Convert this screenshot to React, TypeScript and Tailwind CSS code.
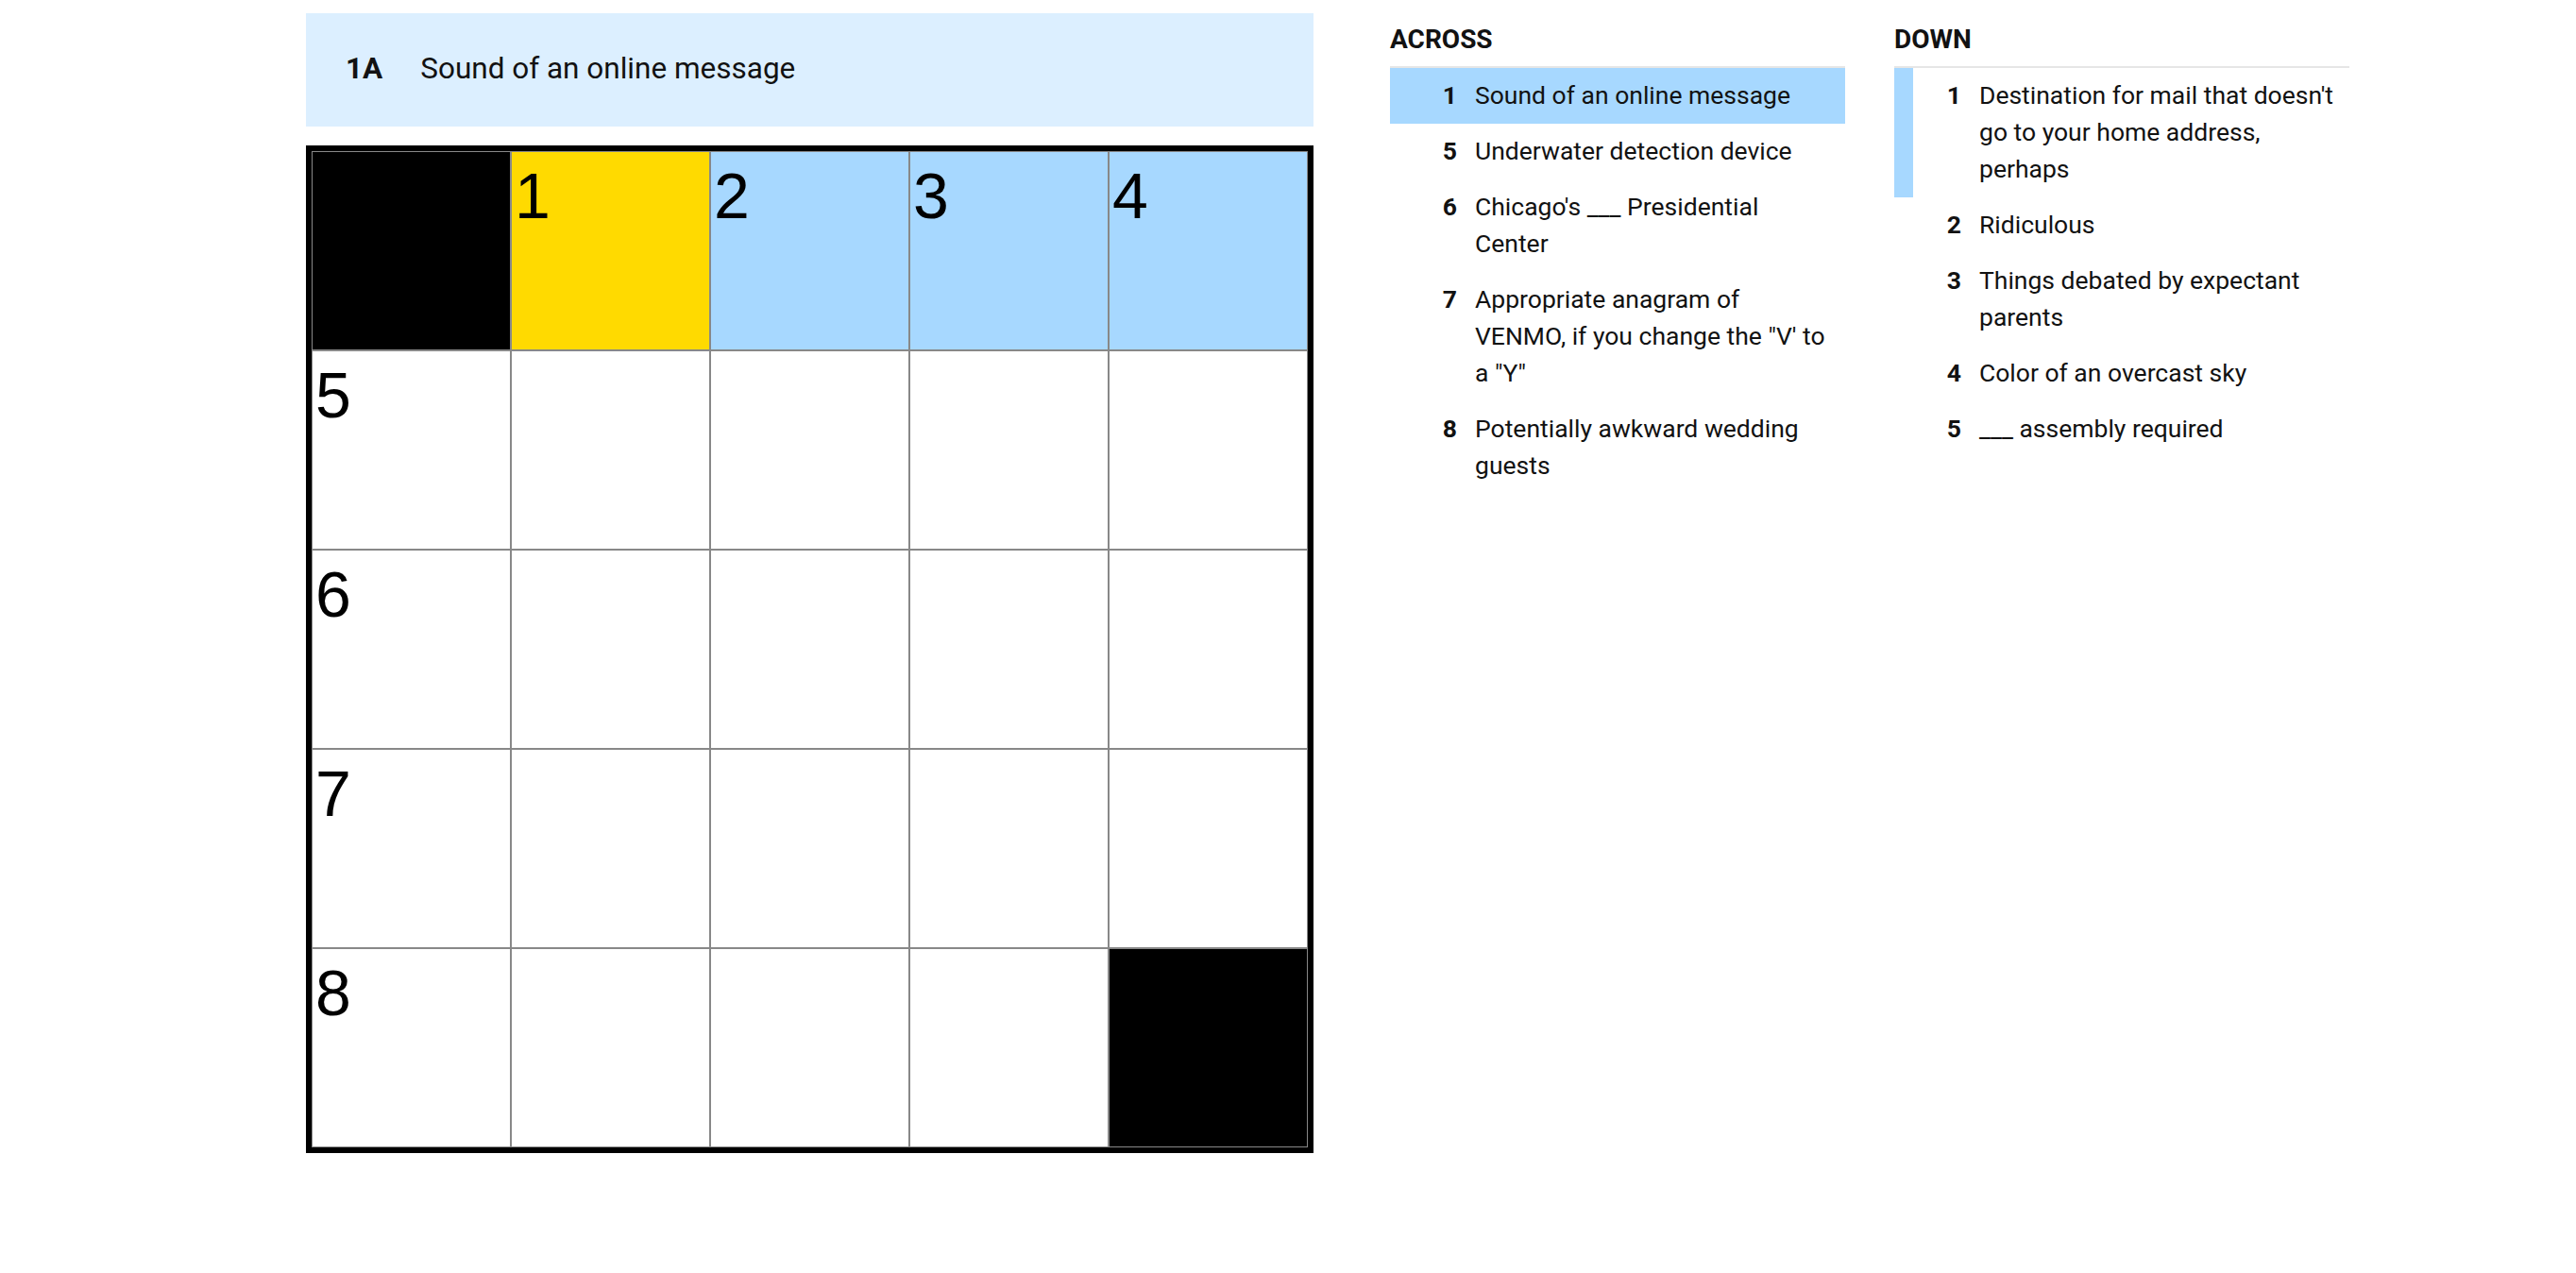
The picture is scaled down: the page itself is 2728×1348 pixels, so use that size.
import React from 'react';

type Clue = { n: number; text: string };

const across: Clue[] = [
  { n: 1, text: 'Sound of an online message' },
  { n: 5, text: 'Underwater detection device' },
  { n: 6, text: "Chicago's ___ Presidential Center" },
  // break kept where the narrow column puts it
  { n: 7, text: 'Appropriate anagram of\nVENMO, if you change the "V\' to a "Y"' },
  { n: 8, text: 'Potentially awkward wedding guests' },
];

const down: Clue[] = [
  { n: 1, text: "Destination for mail that doesn't go to your home address, perhaps" },
  { n: 2, text: 'Ridiculous' },
  { n: 3, text: 'Things debated by expectant parents' },
  { n: 4, text: 'Color of an overcast sky' },
  { n: 5, text: '___ assembly required' },
];

// '#' = block, anything else = open square; numbers live in a separate map
const layout = ['#....', '.....', '.....', '.....', '....#'];
const labels: Record<string, number> = {
  '0-1': 1,
  '0-2': 2,
  '0-3': 3,
  '0-4': 4,
  '1-0': 5,
  '2-0': 6,
  '3-0': 7,
  '4-0': 8,
};

const FONT = { fontFamily: 'Roboto, "Liberation Sans", sans-serif' };

function cellColor(r: number, c: number) {
  if (layout[r][c] === '#') return 'bg-black';
  if (r === 0 && c === 1) return 'bg-[#ffda00]';
  if (r === 0) return 'bg-[#a7d8ff]';
  return 'bg-white';
}

function Board() {
  return (
    <div className="border-[6px] border-black w-fit">
      <div className="grid grid-cols-[repeat(5,211px)] grid-rows-[repeat(5,211px)]">
        {layout.map((row, r) =>
          row.split('').map((_, c) => {
            const label = labels[`${r}-${c}`];
            return (
              <div
                key={`${r}-${c}`}
                className={`border border-[#888888] pl-[3px] pt-[12px] ${cellColor(r, c)}`}
              >
                {label && (
                  <span
                    className="block text-[68px] leading-none text-black"
                    style={{ fontFamily: '"Liberation Sans", Arial, sans-serif' }}
                  >
                    {label}
                  </span>
                )}
              </div>
            );
          })
        )}
      </div>
    </div>
  );
}

function ClueList({ title, clues, active, related }: { title: string; clues: Clue[]; active?: number; related?: number }) {
  return (
    <div className="w-[482px]">
      <h3 className="pt-[11px] pb-[12px] border-b-2 border-[#e6e6e6] text-[28px] leading-[33px] font-bold text-[#121212]">
        {title}
      </h3>
      <ol>
        {clues.map((clue) => (
          <li
            key={clue.n}
            className={`flex pt-[9px] pb-[11px] pr-[8px] text-[26.5px] leading-[39px] text-[#121212] ${
              clue.n === active ? 'bg-[#a7d8ff]' : ''
            } ${clue.n === related ? 'shadow-[inset_20px_0_0_#a7d8ff]' : ''}`}
          >
            <span className="w-[71px] shrink-0 text-right font-bold">{clue.n}</span>
            <span className="ml-[19px] flex-1 whitespace-pre-line">{clue.text}</span>
          </li>
        ))}
      </ol>
    </div>
  );
}

export default function App() {
  return (
    <div className="min-h-screen bg-white" style={FONT}>
      <div className="flex pt-[14px] pl-[324px]">
        <div className="flex flex-col gap-[20px]">
          <div className="h-[120px] w-[1067px] bg-[#dcefff] flex items-center pl-[42px] pb-[2px] text-[#121212]">
            <span className="text-[31.5px] font-bold mr-[40px]">1A</span>
            <span className="text-[31.5px]">Sound of an online message</span>
          </div>
          <Board />
        </div>
        <div className="flex gap-[52px] ml-[81px]">
          <ClueList title="ACROSS" clues={across} active={1} />
          <ClueList title="DOWN" clues={down} related={1} />
        </div>
      </div>
    </div>
  );
}
